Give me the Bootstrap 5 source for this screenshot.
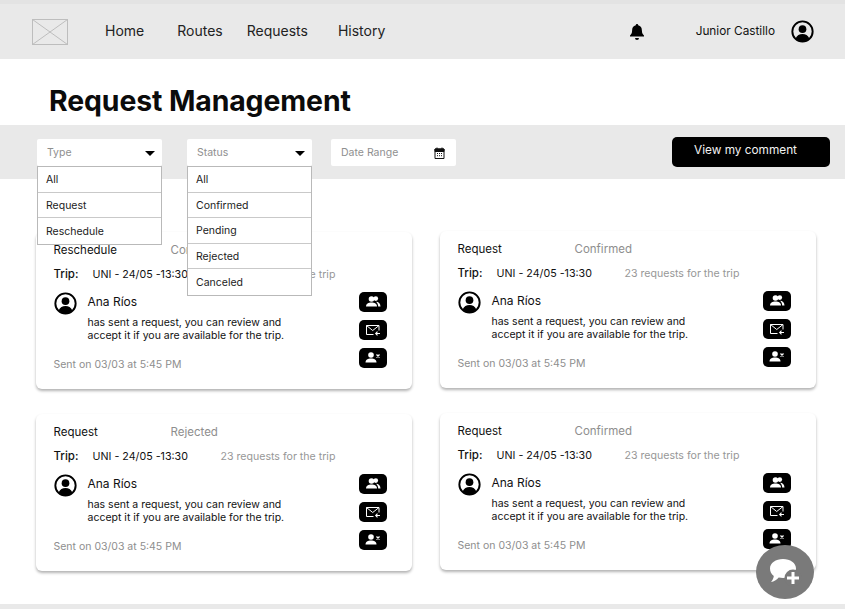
<!DOCTYPE html>
<html lang="en">
<head>
  <meta charset="UTF-8" />
  <meta name="viewport" content="width=device-width, initial-scale=1.0"/>
  <title>Request Management</title>
  <link href="https://cdn.jsdelivr.net/npm/bootstrap@5.3.3/dist/css/bootstrap.min.css" rel="stylesheet">
  <style>
    html, body { height: 609px; overflow: hidden; }
    body { font-family: Inter, "Liberation Sans", sans-serif; color: #111; background: #fff; border-top: 4px solid #e3e3e3; position: relative; }
    .page-end { position: absolute; left: 0; right: 0; top: 600px; height: 5px; background: #e9e9e9; }
    .top-nav { height: 55px; background: #e9e9e9; padding: 0 31px 0 32px; }
    .logo-box { width: 36px; height: 26px; margin-right: 37px; }
    .top-nav .nav-link { color: #222; font-size: 14px; padding: 0 0 2px; }
    .link-gap { gap: 33px; }
    .link-gap .tight { margin-left: -9px; }
    .link-gap .last { margin-left: -3px; }
    .user-name { font-size: 11.8px; margin: 0 16px 0 50px; }
    .page-title { font-size: 28.4px; font-weight: 700; color: #0b0b0b; margin: 24px 0 0 49px; line-height: 36px; height: 42px; letter-spacing: -.1px; }
    .filter-bar { height: 54px; background: #e9e9e9; padding: 14px 15px 0 37px; position: relative; z-index: 5; }
    .filter-wrap { position: relative; width: 125px; height: 27px; }
    .filter-wrap.second { margin-left: 25px; }
    .filter-box { height: 27px; background: #fff; border-radius: 2px; font-size: 10.5px; color: #8f8f8f; padding: 0 10px; display: flex; align-items: center; justify-content: space-between; }
    .filter-wrap .filter-box { padding-right: 7px; }
    .date-box { width: 125px; margin-left: 19px; padding-right: 11px; }
    .caret-down { width: 0; height: 0; margin-top: 2px; border-left: 5.5px solid transparent; border-right: 5.5px solid transparent; border-top: 5px solid #000; }
    .drop-list { position: absolute; left: 0; top: 27px; width: 125px; border-radius: 0; border: 1px solid #b9b9b9; }
    .drop-list .list-group-item { height: 25.6px; padding: 1px 8px 0; border: 0; border-bottom: 1px solid #c9c9c9; font-size: 10.5px; color: #222; display: flex; align-items: center; border-radius: 0; }
    .drop-list .list-group-item:last-child { border-bottom: 0; }
    .comment-btn { width: 158px; height: 30px; margin-top: -2px; background: #000; color: #f2f2f2; font-size: 11.8px; border: 0; border-radius: 5px; padding: 0 11px 3px 0; }
    .card-area { display: grid; grid-template-columns: 376px 376px; column-gap: 28px; row-gap: 25px; padding: 53px 0 0 36px; }
    .req-card { height: 157px; border: 0; border-radius: 6px; box-shadow: 0 2px 3px rgba(0,0,0,.3); padding: 11px 25px 0 17.5px; position: relative; }
    .right-col { margin-top: -1px; }
    .req-type { font-size: 11.5px; width: 117px; line-height: 14px; }
    .req-status { font-size: 11.5px; color: #8e8e8e; line-height: 14px; }
    .trip-row { margin-top: 10px; height: 16px; }
    .trip-label { font-size: 11.5px; font-weight: 500; width: 39px; }
    .trip-name { font-size: 10.7px; width: 128px; }
    .trip-count { font-size: 10.6px; color: #979797; }
    .avatar { width: 23px; height: 23px; margin: -2px 11px 0 0; flex: none; }
    .req-body { margin-top: 11px; }
    .req-name { font-size: 12px; line-height: 16px; }
    .req-text { font-size: 10.5px; line-height: 13px; margin-top: 6px; width: 215px; }
    .req-sent { font-size: 10.5px; color: #8e8e8e; margin-top: 16px; line-height: 14px; }
    .action-col { position: absolute; right: 25px; top: 60px; display: flex; flex-direction: column; gap: 8px; }
    .action-btn { width: 28px; height: 20px; background: #000; border: 0; border-radius: 5px; padding: 0; display: flex; align-items: center; justify-content: center; }
    .chat-fab { position: absolute; left: 756px; top: 541px; width: 58px; height: 54px; border-radius: 50%; background: #7a7a7a; border: 0; padding: 0; display: flex; align-items: center; justify-content: center; z-index: 6; }
  </style>
</head>
<body>
  <svg width="0" height="0" class="d-block">
    <defs>
      <symbol id="user-ring" viewBox="0 0 24 24">
        <circle cx="12" cy="12" r="10.6" fill="none" stroke="#000" stroke-width="2"/>
        <circle cx="12" cy="9.6" r="4" fill="#000"/>
        <path d="M4.8 19.2c1.4-3.2 4-4.6 7.2-4.6s5.8 1.4 7.2 4.6A10 10 0 0 1 12 22a10 10 0 0 1-7.2-2.8z" fill="#000"/>
      </symbol>
      <symbol id="ico-group" viewBox="0 0 18 14">
        <circle cx="7.5" cy="4" r="2.8" fill="#fff"/>
        <path d="M2 11.5c0-2.700 2.300-4 5.500-4s5.500 1.300 5.500 4z" fill="#fff"/>
        <circle cx="11.800" cy="3.600" r="2.300" fill="#fff"/>
        <path d="M12 6.800c2.500.2 4.500 1.500 4.500 4.700h-2.300c0-1.800-.7-3.400-2.200-4.700z" fill="#fff"/>
      </symbol>
      <symbol id="ico-mail" viewBox="0 0 18 14">
        <path d="M9.500 11.500H2.500v-9h12.500v5" fill="none" stroke="#fff" stroke-width="1"/>
        <path d="M2.500 2.500l6.200 5 6.300-5" fill="none" stroke="#fff" stroke-width="1"/>
        <path d="M16 10.500h-4M13.500 8.700l-1.800 1.800 1.800 1.800" fill="none" stroke="#fff" stroke-width="1.100"/>
      </symbol>
      <symbol id="ico-reject" viewBox="0 0 18 14">
        <circle cx="7" cy="4" r="2.800" fill="#fff"/>
        <path d="M1.500 11.500c0-2.700 2.300-4 5.500-4s5.500 1.300 5.500 4z" fill="#fff"/>
        <path d="M12.500 3.500l3 3M15.500 3.500l-3 3" stroke="#fff" stroke-width="1.300"/>
      </symbol>
    </defs>
  </svg>

  <nav class="navbar top-nav d-flex align-items-center flex-nowrap justify-content-start">
    <svg class="logo-box" viewBox="0 0 36 26">
      <rect x=".5" y=".5" width="35" height="25" fill="none" stroke="#bdbdbd"/>
      <path d="M.5 .5l35 25M35.500 .5l-35 25" stroke="#bdbdbd" fill="none"/>
    </svg>
    <ul class="nav link-gap">
      <li class="nav-item"><a class="nav-link" href="#">Home</a></li>
      <li class="nav-item"><a class="nav-link" href="#">Routes</a></li>
      <li class="nav-item tight"><a class="nav-link" href="#">Requests</a></li>
      <li class="nav-item last"><a class="nav-link" href="#">History</a></li>
    </ul>
    <div class="d-flex align-items-center ms-auto">
      <svg width="18" height="18" viewBox="0 0 18 18"><path d="M9 1a1.200 1.200 0 0 1 1.200 1.300c2.500.6 3.700 2.500 3.700 5.200 0 2.500.8 3.700 2.100 5v1H2v-1c1.300-1.300 2.100-2.500 2.100-5 0-2.700 1.200-4.600 3.700-5.200A1.200 1.200 0 0 1 9 1zM7 15h4a2 2 0 0 1-4 0z" fill="#000"/></svg>
      <span class="user-name">Junior Castillo</span>
      <svg width="23" height="23"><use href="#user-ring"/></svg>
    </div>
  </nav>

  <h1 class="page-title">Request Management</h1>

  <div class="filter-bar d-flex align-items-start">
    <div class="filter-wrap">
      <div class="filter-box"><span>Type</span><span class="caret-down"></span></div>
      <ul class="list-group drop-list">
        <li class="list-group-item">All</li>
        <li class="list-group-item">Request</li>
        <li class="list-group-item">Reschedule</li>
      </ul>
    </div>
    <div class="filter-wrap second">
      <div class="filter-box"><span>Status</span><span class="caret-down"></span></div>
      <ul class="list-group drop-list">
        <li class="list-group-item">All</li>
        <li class="list-group-item">Confirmed</li>
        <li class="list-group-item">Pending</li>
        <li class="list-group-item">Rejected</li>
        <li class="list-group-item">Canceled</li>
      </ul>
    </div>
    <div class="filter-box date-box">
      <span>Date Range</span>
      <svg width="11" height="12" viewBox="0 0 11 12"><path d="M1 2h9v9.500H1z" fill="none" stroke="#111"/><path d="M1 2h9v2.500H1zM3 .5v2M8 .5v2" stroke="#111" fill="#111"/><path d="M3 6.500h1M5 6.500h1M7 6.500h1M3 8.700h1M5 8.700h1M7 8.700h1" stroke="#111"/></svg>
    </div>
    <button class="btn comment-btn ms-auto" type="button">View my comment</button>
  </div>

  <div class="card-area">
    <div class="card req-card">
      <div class="d-flex"><span class="req-type">Reschedule</span><span class="req-status">Confirmed</span></div>
      <div class="d-flex align-items-center trip-row"><span class="trip-label">Trip:</span><span class="trip-name">UNI - 24/05 -13:30</span><span class="trip-count">23 requests for the trip</span></div>
      <div class="d-flex req-body">
        <svg class="avatar"><use href="#user-ring"/></svg>
        <div>
          <div class="req-name">Ana Ríos</div>
          <div class="req-text">has sent a request, you can review and accept it if you are available for the trip.</div>
        </div>
      </div>
      <div class="req-sent">Sent on 03/03 at 5:45 PM</div>
      <div class="action-col">
        <button class="action-btn" type="button"><svg width="18" height="14"><use href="#ico-group"/></svg></button>
        <button class="action-btn" type="button"><svg width="18" height="14"><use href="#ico-mail"/></svg></button>
        <button class="action-btn" type="button"><svg width="18" height="14"><use href="#ico-reject"/></svg></button>
      </div>
    </div>

    <div class="card req-card right-col">
      <div class="d-flex"><span class="req-type">Request</span><span class="req-status">Confirmed</span></div>
      <div class="d-flex align-items-center trip-row"><span class="trip-label">Trip:</span><span class="trip-name">UNI - 24/05 -13:30</span><span class="trip-count">23 requests for the trip</span></div>
      <div class="d-flex req-body">
        <svg class="avatar"><use href="#user-ring"/></svg>
        <div>
          <div class="req-name">Ana Ríos</div>
          <div class="req-text">has sent a request, you can review and accept it if you are available for the trip.</div>
        </div>
      </div>
      <div class="req-sent">Sent on 03/03 at 5:45 PM</div>
      <div class="action-col">
        <button class="action-btn" type="button"><svg width="18" height="14"><use href="#ico-group"/></svg></button>
        <button class="action-btn" type="button"><svg width="18" height="14"><use href="#ico-mail"/></svg></button>
        <button class="action-btn" type="button"><svg width="18" height="14"><use href="#ico-reject"/></svg></button>
      </div>
    </div>

    <div class="card req-card">
      <div class="d-flex"><span class="req-type">Request</span><span class="req-status">Rejected</span></div>
      <div class="d-flex align-items-center trip-row"><span class="trip-label">Trip:</span><span class="trip-name">UNI - 24/05 -13:30</span><span class="trip-count">23 requests for the trip</span></div>
      <div class="d-flex req-body">
        <svg class="avatar"><use href="#user-ring"/></svg>
        <div>
          <div class="req-name">Ana Ríos</div>
          <div class="req-text">has sent a request, you can review and accept it if you are available for the trip.</div>
        </div>
      </div>
      <div class="req-sent">Sent on 03/03 at 5:45 PM</div>
      <div class="action-col">
        <button class="action-btn" type="button"><svg width="18" height="14"><use href="#ico-group"/></svg></button>
        <button class="action-btn" type="button"><svg width="18" height="14"><use href="#ico-mail"/></svg></button>
        <button class="action-btn" type="button"><svg width="18" height="14"><use href="#ico-reject"/></svg></button>
      </div>
    </div>

    <div class="card req-card right-col">
      <div class="d-flex"><span class="req-type">Request</span><span class="req-status">Confirmed</span></div>
      <div class="d-flex align-items-center trip-row"><span class="trip-label">Trip:</span><span class="trip-name">UNI - 24/05 -13:30</span><span class="trip-count">23 requests for the trip</span></div>
      <div class="d-flex req-body">
        <svg class="avatar"><use href="#user-ring"/></svg>
        <div>
          <div class="req-name">Ana Ríos</div>
          <div class="req-text">has sent a request, you can review and accept it if you are available for the trip.</div>
        </div>
      </div>
      <div class="req-sent">Sent on 03/03 at 5:45 PM</div>
      <div class="action-col">
        <button class="action-btn" type="button"><svg width="18" height="14"><use href="#ico-group"/></svg></button>
        <button class="action-btn" type="button"><svg width="18" height="14"><use href="#ico-mail"/></svg></button>
        <button class="action-btn" type="button"><svg width="18" height="14"><use href="#ico-reject"/></svg></button>
      </div>
    </div>
  </div>

  <button class="chat-fab" type="button" aria-label="New comment">
    <svg width="34" height="32" viewBox="0 0 34 32">
      <path d="M15 3c7.200 0 13 4 13 9.500S22.200 22 15 22c-1.500 0-3-.2-4.300-.5C8.500 24 6 25.500 3 26c1.500-1.700 2.500-3.500 2.800-6C3.400 18.200 2 15.600 2 12.500 2 7 7.800 3 15 3z" fill="#fff"/>
      <circle cx="25" cy="22" r="8.500" fill="#7a7a7a"/>
      <path d="M25 16v12M19 22h12" stroke="#fff" stroke-width="3"/>
    </svg>
  </button>
  <div class="page-end"></div>

  <script src="https://cdn.jsdelivr.net/npm/bootstrap@5.3.3/dist/js/bootstrap.bundle.min.js"></script>
</body>
</html>
